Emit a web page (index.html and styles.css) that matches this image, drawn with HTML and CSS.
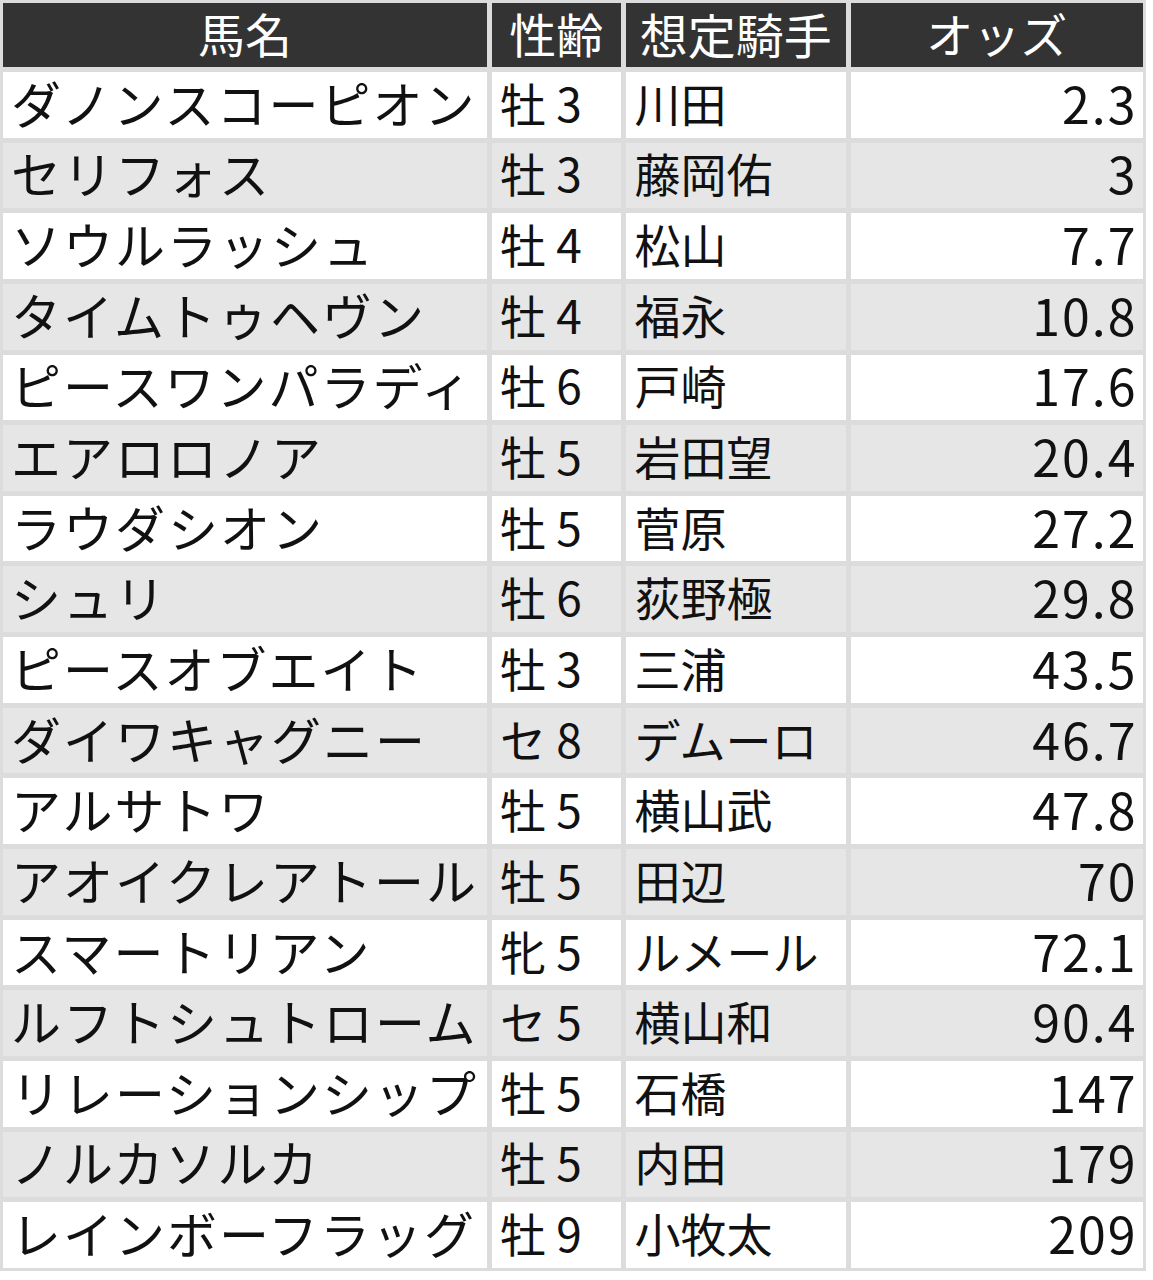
FILE: index.html
```html
<!DOCTYPE html>
<html lang="ja">
<head>
<meta charset="utf-8">
<title>想定オッズ</title>
<link rel="stylesheet" href="styles.css">
</head>
<body>
<div class="table">
  <div class="row head">
    <div class="cell c-name">馬名</div>
    <div class="cell c-age">性齢</div>
    <div class="cell c-jockey">想定騎手</div>
    <div class="cell c-odds">オッズ</div>
  </div>
  <div class="row"><div class="cell c-name">ダノンスコーピオン</div><div class="cell c-age">牡 3</div><div class="cell c-jockey">川田</div><div class="cell c-odds">2.3</div></div>
  <div class="row alt"><div class="cell c-name">セリフォス</div><div class="cell c-age">牡 3</div><div class="cell c-jockey">藤岡佑</div><div class="cell c-odds">3</div></div>
  <div class="row"><div class="cell c-name">ソウルラッシュ</div><div class="cell c-age">牡 4</div><div class="cell c-jockey">松山</div><div class="cell c-odds">7.7</div></div>
  <div class="row alt"><div class="cell c-name">タイムトゥヘヴン</div><div class="cell c-age">牡 4</div><div class="cell c-jockey">福永</div><div class="cell c-odds">10.8</div></div>
  <div class="row"><div class="cell c-name">ピースワンパラディ</div><div class="cell c-age">牡 6</div><div class="cell c-jockey">戸崎</div><div class="cell c-odds">17.6</div></div>
  <div class="row alt"><div class="cell c-name">エアロロノア</div><div class="cell c-age">牡 5</div><div class="cell c-jockey">岩田望</div><div class="cell c-odds">20.4</div></div>
  <div class="row"><div class="cell c-name">ラウダシオン</div><div class="cell c-age">牡 5</div><div class="cell c-jockey">菅原</div><div class="cell c-odds">27.2</div></div>
  <div class="row alt"><div class="cell c-name">シュリ</div><div class="cell c-age">牡 6</div><div class="cell c-jockey">荻野極</div><div class="cell c-odds">29.8</div></div>
  <div class="row"><div class="cell c-name">ピースオブエイト</div><div class="cell c-age">牡 3</div><div class="cell c-jockey">三浦</div><div class="cell c-odds">43.5</div></div>
  <div class="row alt"><div class="cell c-name">ダイワキャグニー</div><div class="cell c-age">セ 8</div><div class="cell c-jockey">デムーロ</div><div class="cell c-odds">46.7</div></div>
  <div class="row"><div class="cell c-name">アルサトワ</div><div class="cell c-age">牡 5</div><div class="cell c-jockey">横山武</div><div class="cell c-odds">47.8</div></div>
  <div class="row alt"><div class="cell c-name">アオイクレアトール</div><div class="cell c-age">牡 5</div><div class="cell c-jockey">田辺</div><div class="cell c-odds">70</div></div>
  <div class="row"><div class="cell c-name">スマートリアン</div><div class="cell c-age">牝 5</div><div class="cell c-jockey">ルメール</div><div class="cell c-odds">72.1</div></div>
  <div class="row alt"><div class="cell c-name">ルフトシュトローム</div><div class="cell c-age">セ 5</div><div class="cell c-jockey">横山和</div><div class="cell c-odds">90.4</div></div>
  <div class="row"><div class="cell c-name">リレーションシップ</div><div class="cell c-age">牡 5</div><div class="cell c-jockey">石橋</div><div class="cell c-odds">147</div></div>
  <div class="row alt"><div class="cell c-name">ノルカソルカ</div><div class="cell c-age">牡 5</div><div class="cell c-jockey">内田</div><div class="cell c-odds">179</div></div>
  <div class="row"><div class="cell c-name">レインボーフラッグ</div><div class="cell c-age">牡 9</div><div class="cell c-jockey">小牧太</div><div class="cell c-odds">209</div></div>
</div>
</body>
</html>
```

FILE: styles.css
```css
html, body {
  margin: 0;
  padding: 0;
  background: #ffffff;
}

body {
  font-family: "Noto Sans CJK JP", "Noto Sans", sans-serif;
  color: #111111;
}

.table {
  display: grid;
  grid-template-columns: 484px 128.5px 220.5px 291.5px;
  grid-template-rows: 64px repeat(17, 65.65px);
  gap: 5px;
  padding: 3px;
  width: max-content;
  background: #dcdcdc;
}

.row {
  display: contents;
}

.cell {
  display: flex;
  align-items: center;
  background: #ffffff;
  font-size: 46px;
  line-height: 1;
  white-space: pre;
  overflow: visible;
  padding-bottom: 6px;
  box-sizing: border-box;
}

.row.alt .cell {
  background: #e6e6e6;
}

.row.head .cell {
  background: #333333;
  color: #ffffff;
  font-size: 47px;
  justify-content: center;
  padding: 0 0 5px 0;
}

.c-name {
  padding-left: 8px;
}

.row .c-name {
  font-size: 50px;
  letter-spacing: 2px;
}

.c-age {
  padding-left: 8px;
}

.c-jockey {
  padding-left: 9px;
}

.row .c-odds {
  justify-content: flex-end;
  padding-right: 5px;
  font-size: 50px;
  letter-spacing: 2px;
}

.row.head .c-name,
.row.head .c-odds {
  letter-spacing: 0;
  font-size: 47px;
}

.row.head .c-jockey {
  font-size: 48px;
}
```
